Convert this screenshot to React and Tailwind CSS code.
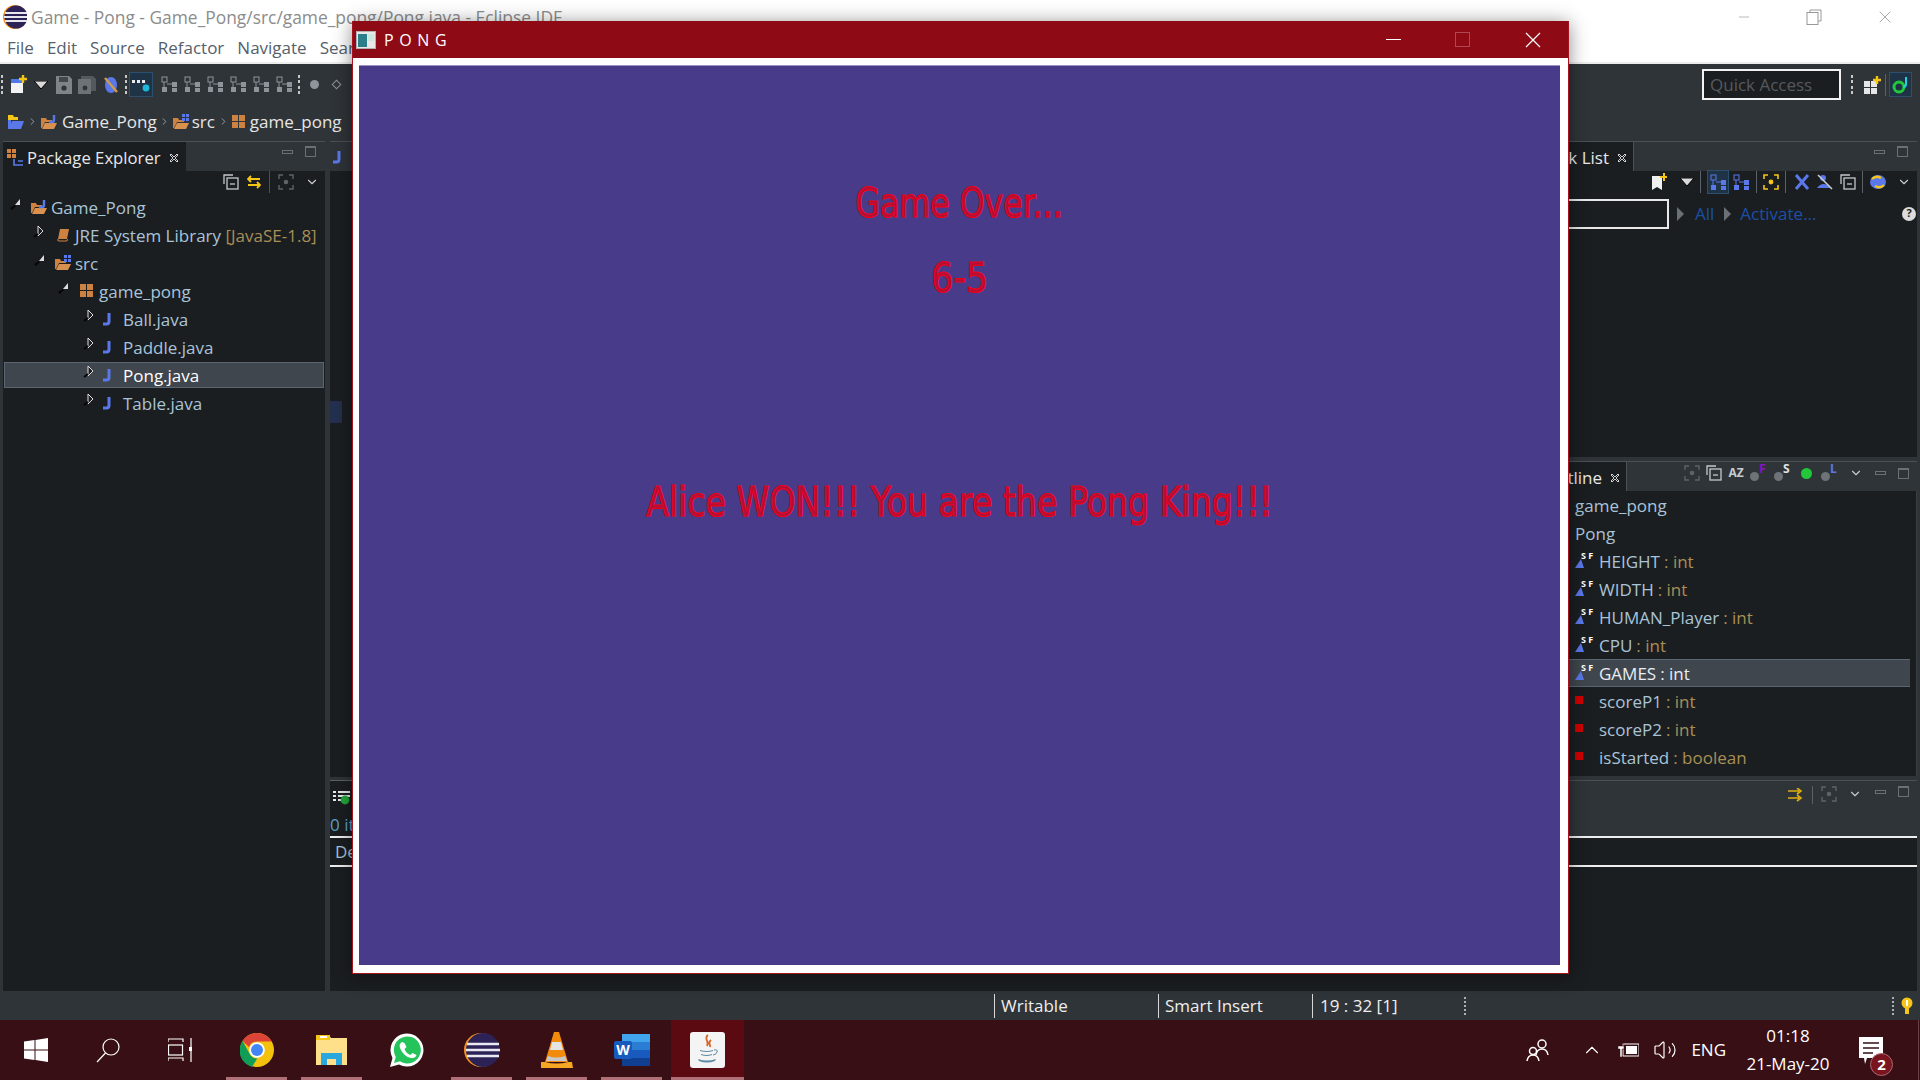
import React from "react";
import { ChevronDown, ChevronRight, ChevronUp, Minus, X, Volume2 } from "lucide-react";

const uiFont = "font-['Open_Sans',sans-serif]";
const treeText = "text-[17px] leading-none text-[#a9c4d8] whitespace-nowrap";

const Arrow = ({ open }) =>
  open ? (
    <svg width="14" height="14" viewBox="0 0 14 14" className="shrink-0">
      <path d="M12 2v6H7z" fill="#dcdcdc" />
      <path d="M2 11l5-3 1 1-4 4z" fill="#050505" />
    </svg>
  ) : (
    <svg width="14" height="14" viewBox="0 0 14 14" className="shrink-0">
      <path d="M6 1l5 5-5 5z" fill="#1c1f22" stroke="#e0e0e0" />
      <path d="M2 12l4-3" stroke="#050505" strokeWidth="2" />
    </svg>
  );

const JFile = ({ className = "" }) => (
  <svg width="12" height="16" viewBox="0 0 12 16" className={`shrink-0 ${className}`}>
    <path d="M8 2v8.500q0 2.500-2.500 2.500H2" fill="none" stroke="#5a78ea" strokeWidth="3" />
  </svg>
);

const Folder = ({ badge }) => (
  <svg width="18" height="16" viewBox="0 0 18 16" className="shrink-0">
    <path d="M1 14V4h5l1 2h5v2H5l-3 6z" fill="#cd8240" />
    <path d="M2 15l3-6h12l-3 6z" fill="#d99150" />
    {badge === "j" && <path d="M14 1v5q0 2-2 2H9" fill="none" stroke="#5a78ea" strokeWidth="2.400" />}
    {badge === "p" && (
      <g fill="#5a78ea">
        <rect x="10" y="0" width="3" height="3" />
        <rect x="14" y="0" width="3" height="3" />
        <rect x="10" y="4" width="3" height="3" />
        <rect x="14" y="4" width="3" height="3" />
      </g>
    )}
  </svg>
);

const Pkg = () => (
  <svg width="14" height="14" viewBox="0 0 14 14" className="shrink-0">
    <g fill="#cd8240">
      <rect x="0" y="0" width="6" height="6" />
      <rect x="7" y="0" width="6" height="6" />
      <rect x="0" y="7" width="6" height="6" />
      <rect x="7" y="7" width="6" height="6" />
    </g>
  </svg>
);

const Lib = () => (
  <svg width="14" height="14" viewBox="0 0 14 14" className="shrink-0">
    <path d="M4 1h9l-2 10H2z" fill="#cd8240" />
    <path d="M2 11q-1 2 1 2h8l.5-2" fill="none" stroke="#cd8240" />
  </svg>
);

const TreeRow = ({ indent, arrow, icon, children, selected, file }) => (
  <div
    className={`flex items-center ${
      selected ? "mx-px my-px h-[26px] border border-[#5c6670] bg-[#3f464d]" : "h-[28px]"
    }`}
    style={{ paddingLeft: indent }}
  >
    <span className="-mt-[6px] w-[19px] shrink-0">
      <Arrow open={arrow === "open"} />
    </span>
    <span className={`flex shrink-0 justify-center ${file ? "w-[22px]" : "w-[24px]"}`}>{icon}</span>
    <span className={`${treeText} ${selected ? "text-white" : ""}`}>{children}</span>
  </div>
);

const Decor = ({ children }) => <span className="text-[#a88f55]">{children}</span>;

const MinMax = () => (
  <div className="flex items-center gap-[12px]">
    <span className="h-[4px] w-[11px] border border-[#6a7075]" />
    <span className="h-[11px] w-[11px] border border-[#6a7075] border-t-2" />
  </div>
);

const Focus = () => (
  <svg width="16" height="16" viewBox="0 0 16 16" fill="none" stroke="#5d6368" strokeWidth="1.400" className="shrink-0">
    <path d="M1 5V1h4M11 1h4v4M15 11v4h-4M5 15H1v-4" />
    <circle cx="8" cy="8" r="1.600" fill="#5d6368" />
  </svg>
);

const Collapse = () => (
  <svg width="16" height="16" viewBox="0 0 16 16" fill="none" stroke="#c4c8cc" strokeWidth="1.300" className="shrink-0">
    <path d="M1 10V1h9" />
    <rect x="4" y="4" width="11" height="11" />
    <path d="M7 10h5" />
  </svg>
);

const TreeTool = ({ color = "#8e9499" }) => (
  <svg width="17" height="17" viewBox="0 0 17 17" fill={color} className="shrink-0">
    <rect x="1" y="1" width="5" height="5" fill="none" stroke={color} />
    <rect x="1" y="11" width="5" height="5" />
    <rect x="11" y="6" width="5" height="5" />
    <rect x="11" y="12" width="5" height="4" />
    <path d="M6 8h5M3 6v5" stroke={color} />
  </svg>
);

const Grid = ({ accent }) => (
  <svg width="20" height="20" viewBox="0 0 20 20" className="shrink-0">
    <path d="M3 4h12v14H3z" fill="#f2f2f2" />
    <path d="M3 4h12v4H3z" fill="#4e78e8" />
    <path d="M15 0v8M11 4h8" stroke={accent} strokeWidth="2.400" />
  </svg>
);

const Sep = () => <span className="mx-[3px] h-[22px] w-px shrink-0 bg-[#5b6166]" />;
const Dots = () => (
  <span className="flex h-[20px] shrink-0 flex-col justify-between">
    <i className="h-[3px] w-[2px] bg-[#c8c8c8]" />
    <i className="h-[3px] w-[2px] bg-[#c8c8c8]" />
    <i className="h-[3px] w-[2px] bg-[#c8c8c8]" />
    <i className="h-[3px] w-[2px] bg-[#c8c8c8]" />
  </span>
);

const DropTri = () => (
  <svg width="14" height="8" viewBox="0 0 14 8" className="shrink-0">
    <path d="M0 0h14L7 8z" fill="#dadada" stroke="#000" strokeWidth="1" />
  </svg>
);

const MainToolbar = () => (
  <div className="flex h-[41px] shrink-0 items-center bg-[#2f3438] pl-[1px]">
    <Dots />
    <span className="ml-[5px]"><Grid accent="#f5c518" /></span>
    <span className="ml-[6px]"><DropTri /></span>
    <svg width="16" height="18" viewBox="0 0 16 18" className="ml-[8px] shrink-0">
      <path d="M0 0h13l3 3v15H0z" fill="#7f8488" />
      <rect x="3" y="1" width="9" height="5" fill="#42474b" />
      <circle cx="8" cy="12" r="2.600" fill="#2f3438" />
    </svg>
    <svg width="18" height="18" viewBox="0 0 18 18" className="ml-[6px] shrink-0">
      <path d="M3 0h12l3 3v12H3z" fill="#54595d" />
      <path d="M0 3h13v15H0z" fill="#6d7276" />
      <circle cx="7" cy="12" r="2.400" fill="#2f3438" />
    </svg>
    <svg width="16" height="18" viewBox="0 0 16 18" className="ml-[7px] shrink-0">
      <ellipse cx="8" cy="9" rx="6" ry="8" fill="#5a78ea" />
      <path d="M2 2l12 14" stroke="#cd9a50" strokeWidth="2.400" />
    </svg>
    <span className="ml-[6px]"><Dots /></span>
    <span className="ml-[2px] flex h-[25px] w-[24px] items-center justify-center border border-[#2c4f6d] bg-[#1f3347]">
      <svg width="18" height="14" viewBox="0 0 18 14">
        <g fill="#e8e8e8"><rect x="0" y="2" width="3" height="3" /><rect x="5" y="2" width="3" height="3" /><rect x="10" y="2" width="3" height="3" /></g>
        <circle cx="14" cy="10" r="3.400" fill="#1fb8d8" />
      </svg>
    </span>
    <span className="ml-[8px] flex items-center gap-[6px]">
      <TreeTool />
      <TreeTool />
      <TreeTool />
      <TreeTool />
      <TreeTool />
      <TreeTool />
    </span>
    <span className="ml-[5px]"><Dots /></span>
    <span className="ml-[10px] h-[9px] w-[9px] rounded-full bg-[#8e9499]" />
    <span className="ml-[14px] h-[7px] w-[7px] rotate-45 border border-[#8e9499]" />
    <div className="ml-auto flex items-center pr-[8px]">
      <div className={`flex h-[31px] w-[139px] items-center border-2 border-[#f2f2f2] bg-[#1b1e21] pl-[6px] text-[17px] text-[#55595d] ${uiFont}`}>
        Quick Access
      </div>
      <span className="ml-[10px] mr-[9px]"><Dots /></span>
      <svg width="20" height="20" viewBox="0 0 20 20" className="shrink-0">
        <g fill="#e6e6e6"><rect x="2" y="6" width="6" height="6" /><rect x="9" y="6" width="6" height="6" /><rect x="2" y="13" width="6" height="6" /><rect x="9" y="13" width="6" height="6" /></g>
        <path d="M15 1v8M11 5h8" stroke="#f5c518" strokeWidth="2.400" />
      </svg>
      <Sep />
      <span className="flex h-[25px] w-[23px] items-center justify-center border border-[#2c4f6d] bg-[#1f3347]">
        <svg width="20" height="20" viewBox="0 0 20 20" fill="none">
          <circle cx="8" cy="12" r="5" stroke="#22c83a" strokeWidth="3" />
          <path d="M15 2v7q0 3-3 3" stroke="#20d0e0" strokeWidth="2" />
        </svg>
      </span>
    </div>
  </div>
);

const Breadcrumb = () => (
  <div className={`flex h-[36px] shrink-0 items-center bg-[#2f3438] pb-[3px] pl-[8px] text-[17px] text-[#e6e6e6] ${uiFont}`}>
    <svg width="16" height="16" viewBox="0 0 16 16" className="shrink-0">
      <path d="M0 1h5l1 2h4v3H0z" fill="#f5c518" />
      <path d="M1 15l3-8h12l-3 8z" fill="#5a78ea" />
      <path d="M0 6h3v9H0z" fill="#5a78ea" />
    </svg>
    <ChevronRight size={11} className="ml-[3px] mr-[2px] text-[#a0a4a8]" />
    <Folder badge="j" />
    <span className="ml-[4px]">Game_Pong</span>
    <ChevronRight size={11} className="ml-[2px] mr-[2px] text-[#a0a4a8]" />
    <Folder badge="p" />
    <span className="ml-[2px]">src</span>
    <ChevronRight size={11} className="ml-[3px] mr-[3px] text-[#a0a4a8]" />
    <Pkg />
    <span className="ml-[4px]">game_pong</span>
  </div>
);

const TabStrip = ({ children, right }) => (
  <div className="flex h-[30px] shrink-0 items-stretch border-t border-[#4a5055] bg-[#2f3438]">
    {children}
    <div className="ml-auto flex items-center self-start pt-[4px] pr-[9px]">{right}</div>
  </div>
);

const TabClose = () => (
  <svg width="10" height="10" viewBox="0 0 10 10" className="ml-[8px] shrink-0" fill="none" stroke="#cfcfcf">
    <path d="M1 2l1-1 3 3 3-3 1 1-3 3 3 3-1 1-3-3-3 3-1-1 3-3z" />
  </svg>
);

const PackageExplorer = () => (
  <div className="flex w-[322px] shrink-0 flex-col">
    <TabStrip right={<MinMax />}>
      <div className={`flex w-[183px] items-center bg-[#1b1e21] pl-[4px] pt-[2px] text-[16.700px] text-[#e8e8e8] ${uiFont}`}>
        <svg width="18" height="18" viewBox="0 0 18 18" className="shrink-0">
          <g fill="#cd8240"><rect x="0" y="0" width="4" height="4" /><rect x="5" y="0" width="4" height="4" /><rect x="0" y="5" width="4" height="4" /><rect x="5" y="5" width="4" height="4" /></g>
          <path d="M7 10v6h4M11 12h5M11 16h5" stroke="#5a78ea" fill="none" strokeWidth="1.600" />
        </svg>
        <span className="ml-[2px] whitespace-nowrap">Package Explorer</span>
        <TabClose />
      </div>
    </TabStrip>
    <div className={`min-h-0 flex-1 bg-[#1b1e21] ${uiFont}`}>
      <div className="flex h-[22px] items-center justify-end gap-[8px] pr-[6px]">
        <Collapse />
        <svg width="14" height="14" viewBox="0 0 14 14" fill="none" stroke="#f5c518" strokeWidth="1.800">
          <path d="M1 4h12M4 1L1 4l3 3M13 10H1M10 7l3 3-3 3" />
        </svg>
        <span className="h-[22px] w-px bg-[#4c5156]" />
        <Focus />
        <ChevronDown size={14} className="ml-[3px] text-[#c8c8c8]" />
      </div>
      <div>
        <TreeRow indent={5} arrow="open" icon={<Folder badge="j" />}>Game_Pong</TreeRow>
        <TreeRow indent={29} icon={<Lib />}>
          JRE System Library <Decor>[JavaSE-1.8]</Decor>
        </TreeRow>
        <TreeRow indent={29} arrow="open" icon={<Folder badge="p" />}>src</TreeRow>
        <TreeRow indent={53} arrow="open" icon={<Pkg />}>game_pong</TreeRow>
        <TreeRow indent={79} file icon={<JFile className="mr-[10px]" />}>Ball.java</TreeRow>
        <TreeRow indent={79} file icon={<JFile className="mr-[10px]" />}>Paddle.java</TreeRow>
        <TreeRow indent={77} file icon={<JFile className="mr-[10px]" />} selected>Pong.java</TreeRow>
        <TreeRow indent={79} file icon={<JFile className="mr-[10px]" />}>Table.java</TreeRow>
      </div>
    </div>
  </div>
);

const EditorColumn = () => (
  <div className={`ml-[5px] flex min-w-0 flex-1 flex-col ${uiFont}`}>
    <div className="flex h-[30px] shrink-0 items-center border-t border-[#4a5055] bg-[#2f3438] pl-[1px]">
      <JFile />
    </div>
    <div className="relative h-[606px] shrink-0 bg-[#1b1e21]">
      <span className="absolute left-0 top-[230px] h-[22px] w-[12px] bg-[#23304f]" />
    </div>
    <div className="h-[3px] shrink-0 bg-[#2f3438]" />
    <div className="flex min-h-0 flex-1 flex-col border-t border-[#5b6166] bg-[#1b1e21]">
      <div className="flex h-[32px] shrink-0 items-center bg-[#1b1e21] pl-[3px]">
        <svg width="18" height="16" viewBox="0 0 18 16">
          <path d="M0 2h3v2H0zM0 6h3v2H0zM0 10h3v2H0zM5 2h12v2H5zM5 6h12v2H5zM5 10h6v2H5z" fill="#e8e8e8" />
          <circle cx="12" cy="11" r="4.400" fill="#22a83a" />
        </svg>
      </div>
      <div className="h-[23px] shrink-0 whitespace-nowrap text-[17px] leading-[23px] text-[#5da0c8]">0 items</div>
      <div className="h-[31px] shrink-0 whitespace-nowrap border-y-2 border-[#eeeeee] pl-[5px] text-[17px] leading-[27px] text-[#a9c4d8]">Description</div>
    </div>
  </div>
);

const SF = () => (
  <span className="relative flex h-[14px] w-[18px] shrink-0">
    <svg width="10" height="10" viewBox="0 0 10 10" className="absolute bottom-0 left-0">
      <path d="M0 10L6 1l3 9z" fill="#5a78ea" />
    </svg>
    <span className="absolute -top-[3px] left-[6px] whitespace-nowrap text-[9px] font-bold leading-[10px] text-white">S F</span>
  </span>
);

const OutlineRow = ({ name, type, selected, field }) => (
  <div
    className={`flex h-[28px] items-center pl-[10px] ${treeText} ${
      selected ? "mr-[6px] border-y border-[#5c6670] bg-[#3f464d]" : ""
    }`}
  >
    <span className="flex w-[24px] shrink-0 items-center">
      {field === "static" ? <SF /> : <span className="mb-[3px] h-[8px] w-[8px] bg-[#d00000]" />}
    </span>
    <span className={selected ? "text-[#e8eef4]" : ""}>{name}</span>
    <span className={`ml-[4px] ${selected ? "text-[#e8eef4]" : "text-[#a88f55]"}`}>: {type}</span>
  </div>
);

const Dim = ({ letter, color }) => (
  <span className="relative h-[16px] w-[18px] shrink-0">
    <span className="absolute bottom-0 left-0 h-[9px] w-[9px] rounded-full bg-[#6e7377]" />
    <span className="absolute -top-[3px] left-[9px] text-[12px] font-bold leading-[14px]" style={{ color }}>{letter}</span>
  </span>
);

const RightColumn = () => (
  <div className={`flex w-[420px] shrink-0 flex-col pr-[3px] ${uiFont}`}>
    <div className="flex h-[316px] shrink-0 flex-col">
      <TabStrip right={<MinMax />}>
        <div className="flex w-[134px] items-center justify-end border-r border-[#4a5055] bg-[#1b1e21] pr-[6px] pt-[2px] text-[17px] text-[#e8e8e8]">
          Task List
          <TabClose />
        </div>
      </TabStrip>
      <div className="min-h-0 flex-1 bg-[#1b1e21]">
        <div className="flex h-[22px] items-center justify-end gap-[3px] pr-[6px]">
          <svg width="16" height="18" viewBox="0 0 16 18" className="shrink-0">
            <path d="M1 3h10v14l-5-3-5 3z" fill="#f0f0f0" />
            <path d="M13 0v8M9 4h7" stroke="#f5c518" strokeWidth="2" />
          </svg>
          <span className="ml-[10px]"><DropTri /></span>
          <Sep />
          <span className="flex h-[24px] w-[22px] items-center justify-center border border-[#2c4f6d] bg-[#1f3347]">
            <TreeTool color="#5a78ea" />
          </span>
          <span className="ml-[1px]"><TreeTool color="#5a78ea" /></span>
          <Sep />
          <svg width="16" height="16" viewBox="0 0 16 16" fill="none" stroke="#f5c518" strokeWidth="1.600" className="shrink-0">
            <path d="M1 5V1h4M11 1h4v4M15 11v4h-4M5 15H1v-4" />
            <circle cx="8" cy="8" r="1.600" fill="#f5c518" />
          </svg>
          <Sep />
          <svg width="16" height="16" viewBox="0 0 16 16" className="ml-[2px] shrink-0">
            <path d="M2 1l12 14M14 1L2 15" stroke="#5a78ea" strokeWidth="3" />
          </svg>
          <svg width="18" height="16" viewBox="0 0 18 16" className="ml-[3px] shrink-0">
            <circle cx="7" cy="4" r="3" fill="#5a78ea" />
            <path d="M1 14q6-8 14 0z" fill="#5a78ea" />
            <path d="M2 1l14 14" stroke="#c8ccd0" strokeWidth="1.600" />
          </svg>
          <span className="ml-[3px]"><Collapse /></span>
          <Sep />
          <svg width="18" height="16" viewBox="0 0 18 16" className="shrink-0">
            <ellipse cx="9" cy="8" rx="8" ry="7" fill="#5a78ea" />
            <path d="M3 5q4-4 9-1M15 11q-4 4-9 1" fill="none" stroke="#f5c518" strokeWidth="2.400" />
          </svg>
          <ChevronDown size={14} className="ml-[7px] text-[#c8c8c8]" />
        </div>
        <div className="flex h-[33px] items-center pt-[8px]">
          <div className="h-[30px] w-[169px] shrink-0 border-2 border-[#e8e8e8] bg-[#1b1e21]" />
          <svg width="8" height="14" viewBox="0 0 8 14" className="ml-[8px] shrink-0"><path d="M0 0l7 7-7 7z" fill="#6a7075" /></svg>
          <span className="ml-[10px] text-[17px] text-[#1a4fa8]">All</span>
          <svg width="8" height="14" viewBox="0 0 8 14" className="ml-[10px] shrink-0"><path d="M0 0l7 7-7 7z" fill="#6a7075" /></svg>
          <span className="ml-[8px] text-[17px] text-[#1a4fa8]">Activate...</span>
          <span className="ml-auto mr-[1px] flex h-[14px] w-[14px] items-center justify-center rounded-full bg-[#dcdcdc] text-[11px] font-bold text-[#1b1e21]">?</span>
        </div>
      </div>
    </div>
    <div className="h-[4px] shrink-0 bg-[#2f3438]" />
    <div className="flex h-[315px] shrink-0 flex-col">
      <div className="flex h-[30px] shrink-0 items-center border-t border-[#4a5055] bg-[#2f3438]">
        <div className="flex h-full w-[127px] items-center justify-end border-r border-[#4a5055] bg-[#1b1e21] pr-[6px] pt-[2px] text-[17px] text-[#e8e8e8]">
          Outline
          <TabClose />
        </div>
        <div className="ml-auto flex items-center gap-[6px] pb-[7px] pr-[8px]">
          <Focus />
          <Collapse />
          <span className="w-[16px] text-center text-[12px] font-bold leading-none text-[#c8ccd0]">AZ</span>
          <Dim letter="F" color="#8a12c8" />
          <Dim letter="S" color="#e0e0e0" />
          <span className="mx-[3px] h-[11px] w-[11px] rounded-full bg-[#22c83a]" />
          <Dim letter="L" color="#5a78ea" />
          <ChevronDown size={14} className="ml-[4px] text-[#c8c8c8]" />
          <span className="ml-[6px]"><MinMax /></span>
        </div>
      </div>
      <div className="min-h-0 flex-1 overflow-hidden border-r border-[#3a3f44] bg-[#1b1e21]">
        <div className={`flex h-[28px] items-center pl-[75px] ${treeText}`}>game_pong</div>
        <div className={`flex h-[28px] items-center pl-[75px] ${treeText}`}>Pong</div>
        <div className="pl-[65px]">
          <OutlineRow field="static" name="HEIGHT" type="int" />
          <OutlineRow field="static" name="WIDTH" type="int" />
          <OutlineRow field="static" name="HUMAN_Player" type="int" />
          <OutlineRow field="static" name="CPU" type="int" />
          <OutlineRow field="static" name="GAMES" type="int" selected />
          <OutlineRow field="private" name="scoreP1" type="int" />
          <OutlineRow field="private" name="scoreP2" type="int" />
          <OutlineRow field="private" name="isStarted" type="boolean" />
        </div>
      </div>
    </div>
    <div className="h-[4px] shrink-0 bg-[#2f3438]" />
    <div className="flex min-h-0 flex-1 flex-col border-t border-[#4a5055] bg-[#2f3438]">
      <div className="flex h-[55px] shrink-0 justify-end gap-[8px] pt-[5px] pr-[8px]">
        <svg width="16" height="14" viewBox="0 0 16 14" fill="none" stroke="#e0b010" strokeWidth="1.600" className="mt-[2px]">
          <path d="M0 3h11M0 10h11M9 0l4 3-4 3M9 7l4 3-4 3" />
        </svg>
        <span className="h-[18px] w-px bg-[#5b6166]" />
        <Focus />
        <ChevronDown size={14} className="ml-[3px] mt-[1px] text-[#c8c8c8]" />
        <span className="ml-[5px] h-fit"><MinMax /></span>
      </div>
      <div className="h-[31px] shrink-0 border-y-2 border-[#eeeeee] bg-[#1b1e21]" />
      <div className="min-h-0 flex-1 bg-[#1b1e21]" />
    </div>
  </div>
);

const StatusBar = () => (
  <div className={`flex h-[29px] shrink-0 items-center bg-[#2f3438] text-[17px] text-[#eeeeee] ${uiFont}`}>
    <div className="ml-[994px] flex h-[24px] w-[164px] items-center border-l border-[#d8d8d8] pl-[6px]">Writable</div>
    <div className="flex h-[24px] w-[154px] items-center border-l border-[#d8d8d8] pl-[6px]">Smart Insert</div>
    <div className="flex h-[24px] w-[152px] items-center border-l border-[#d8d8d8] pl-[7px]">19 : 32 [1]</div>
    <span className="h-[18px] border-l-2 border-dotted border-[#b0b0b0]" />
    <span className="ml-auto h-[18px] border-l-2 border-dotted border-[#b0b0b0]" />
    <svg width="12" height="18" viewBox="0 0 12 18" className="ml-[7px] mr-[7px]">
      <circle cx="6" cy="6" r="5.500" fill="#f5c518" />
      <rect x="4" y="9" width="4" height="8" fill="#f5c518" />
      <rect x="5" y="3" width="2" height="6" fill="#ffffff" />
    </svg>
  </div>
);

const ChromeLogo = () => (
  <svg width="34" height="34" viewBox="0 0 34 34">
    <circle cx="17" cy="17" r="17" fill="#f4c20d" />
    <path d="M17 0a17 17 0 0 1 14.700 8.500H17a8.500 8.500 0 0 0-8 5.500L2.600 8A17 17 0 0 1 17 0z" fill="#db4437" />
    <path d="M2.600 8l6.600 12a8.500 8.500 0 0 0 8 5.500L12 34A17 17 0 0 1 2.600 8z" fill="#0f9d58" />
    <circle cx="17" cy="17" r="7.800" fill="#fff" />
    <circle cx="17" cy="17" r="6" fill="#4285f4" />
  </svg>
);

const ExplorerLogo = () => (
  <svg width="33" height="34" viewBox="0 0 33 34">
    <path d="M1 2h13l2 3h16v27H1z" fill="#ffe08a" />
    <path d="M1 2h14v5H1z" fill="#f5c518" />
    <rect x="5" y="3" width="7" height="2" fill="#fff" />
    <path d="M6 32V20h21v12h-6v-6h-9v6z" fill="#29a8e0" />
  </svg>
);

const WhatsAppLogo = () => (
  <svg width="34" height="34" viewBox="0 0 34 34">
    <path d="M0 34l2.500-9A16.500 16.500 0 1 1 9 31.500z" fill="#fff" />
    <path d="M4 30l1.800-6A13.500 13.500 0 1 1 10 28.300z" fill="#25c45a" />
    <path d="M12 9c-2 1-3 3-2 6 2 5 6 9 11 10 3 .5 5-1 5.500-3l-4-2-2 2c-3-1-5-3-6-6l2-2-2-4z" fill="#fff" />
  </svg>
);

const EclipseLogo = () => (
  <svg width="37" height="34" viewBox="0 0 37 34">
    <circle cx="18" cy="17" r="17" fill="#f7941e" />
    <circle cx="20" cy="17" r="17" fill="#2c2255" />
    <path d="M4 11h32M3 17h34M4 23h32" stroke="#e8e8f0" strokeWidth="2.400" />
  </svg>
);

const VlcLogo = () => (
  <svg width="32" height="36" viewBox="0 0 32 36">
    <path d="M13 0h5l9 30H4z" fill="#f28a0c" />
    <path d="M11 10h9l2 8H9z" fill="#e4e4e4" />
    <path d="M7 24q9 3 17 0l2 5H5z" fill="#c8c8c8" />
    <path d="M0 30h4q12 3 23 0h4l1 6H0z" fill="#f5a623" />
  </svg>
);

const WordLogo = () => (
  <svg width="36" height="34" viewBox="0 0 36 34">
    <rect x="8" y="1" width="28" height="32" rx="2" fill="#2b7cd3" />
    <rect x="8" y="1" width="28" height="8" fill="#41a5ee" />
    <rect x="8" y="17" width="28" height="8" fill="#185abd" />
    <rect x="8" y="25" width="28" height="8" fill="#103f91" />
    <rect x="0" y="8" width="18" height="18" rx="2" fill="#185abd" />
    <text x="9" y="22" textAnchor="middle" fontSize="14" fontWeight="700" fill="#fff" fontFamily="Open Sans">W</text>
  </svg>
);

const JavaLogo = () => (
  <svg width="35" height="36" viewBox="0 0 35 36">
    <rect width="35" height="36" rx="3" fill="#f4f4f4" />
    <path d="M18 3c-5 4 2 6-1 11M21 8c-4 3 0 4-1 7" fill="none" stroke="#d8652a" strokeWidth="1.800" />
    <path d="M10 18q7 2 13 0v1q-6 2-13 0zM11 22q6 2 11 0v1q-5 2-11 0zM8 27q9 3 18 0l-1 2q-8 3-16 0z" fill="#5d8aa5" />
    <path d="M24 18q4-1 3 2t-4 3" fill="none" stroke="#5d8aa5" />
  </svg>
);

const apps = [
  { key: "chrome", icon: <ChromeLogo />, bar: true },
  { key: "explorer", icon: <ExplorerLogo />, bar: true },
  { key: "whatsapp", icon: <WhatsAppLogo /> },
  { key: "eclipse", icon: <EclipseLogo />, bar: true },
  { key: "vlc", icon: <VlcLogo />, bar: true },
  { key: "word", icon: <WordLogo />, bar: true },
];

const Taskbar = () => (
  <div className={`flex h-[60px] shrink-0 items-stretch bg-[#370f14] text-white ${uiFont}`}>
    <div className="flex w-[72px] items-center justify-center">
      <svg width="24" height="24" viewBox="0 0 24 24" fill="#fff">
        <path d="M0 3.500l10.500-1.500v9.500H0zM11.500 2L24 0v11.500H11.500zM0 12.500h10.500V22L0 20.500zM11.500 12.500H24V24l-12.500-2z" />
      </svg>
    </div>
    <div className="flex w-[72px] items-center justify-center">
      <svg width="25" height="25" viewBox="0 0 25 25" fill="none" stroke="#fff" strokeWidth="1.200">
        <circle cx="15" cy="9" r="8" />
        <path d="M9.500 15L1 24" />
      </svg>
    </div>
    <div className="flex w-[72px] items-center justify-center">
      <svg width="24" height="24" viewBox="0 0 24 24" fill="none" stroke="#fff" strokeWidth="1.200">
        <path d="M0 4V1h15v3M0 23v-3h15v3M23 0v24" />
        <rect x="0.500" y="7" width="14" height="10" />
        <rect x="21" y="9" width="4" height="4" fill="#fff" stroke="none" />
      </svg>
    </div>
    <div className="ml-[3px] flex">
      {apps.map((app) => (
        <div key={app.key} className="relative flex w-[75px] items-center justify-center">
          {app.icon}
          {app.bar && <span className="absolute bottom-0 left-[7px] h-[3px] w-[61px] bg-[#b07078]" />}
        </div>
      ))}
      <div className="relative ml-[2px] flex w-[73px] items-center justify-center bg-[#5c0a12]">
        <JavaLogo />
        <span className="absolute bottom-0 left-0 h-[3px] w-full bg-[#b07078]" />
      </div>
    </div>
    <div className="ml-auto flex items-center">
      <svg width="24" height="24" viewBox="0 0 24 24" fill="none" stroke="#fff" strokeWidth="1.500" className="mr-[31px]">
        <circle cx="16" cy="6" r="4" />
        <path d="M10 17q1-6 6-6t6 6" />
        <circle cx="7" cy="13" r="3.500" />
        <path d="M1 23q1-6 6-6t6 6" />
      </svg>
      <ChevronUp size={22} strokeWidth={1.200} className="mr-[14px]" />
      <svg width="22" height="20" viewBox="0 0 22 20" className="mr-[14px]">
        <rect x="6" y="4" width="16" height="12" fill="none" stroke="#fff" />
        <rect x="9" y="6" width="11" height="8" fill="#fff" />
        <path d="M2 1v5M6 1v5M1 6h6v3H5v8H3V9H1z" fill="#fff" stroke="#370f14" strokeWidth=".5" />
      </svg>
      <Volume2 size={24} strokeWidth={1.200} className="mr-[14px]" />
      <span className="mr-[17px] text-[17px]">ENG</span>
      <div className="mr-[26px] flex w-[90px] flex-col items-center gap-[8px] text-[17px] leading-[20px]">
        <span>01:18</span>
        <span className="whitespace-nowrap">21-May-20</span>
      </div>
      <span className="relative mr-[35px] h-[26px] w-[24px]">
        <svg width="24" height="30" viewBox="0 0 24 30">
          <path d="M0 0h24v21H8l-2 6-1-6H0z" fill="#fff" />
          <path d="M4 6h16M4 11h16M4 16h10" stroke="#370f14" strokeWidth="1.500" />
        </svg>
        <span className="absolute -bottom-[13px] -right-[10px] flex h-[23px] w-[23px] items-center justify-center rounded-full border border-[#a86a70] bg-[#7a1520] text-[15px] font-bold leading-none">2</span>
      </span>
      <span className="mr-[1px] h-full w-px bg-[#6b3f44]" />
    </div>
  </div>
);

const Score = ({ children, className }) => (
  <div
    className={`origin-center whitespace-nowrap font-['DejaVu_Sans',sans-serif] text-[40px] leading-none text-[#b01038] [-webkit-text-stroke:1.200px_#ee0018] ${className}`}
  >
    {children}
  </div>
);

const PongWindow = () => (
  <div className="absolute left-[352px] top-[21px] flex h-[953px] w-[1217px] flex-col border-r border-b border-l border-[#a3141f] bg-white shadow-[0_2px_18px_rgba(0,0,0,0.45)]">
    <div className={`flex h-[37px] shrink-0 items-center bg-[#8e0a15] pl-[3px] ${uiFont}`}>
      <svg width="20" height="18" viewBox="0 0 20 18" className="shrink-0">
        <rect x="0.500" y="0.500" width="19" height="17" fill="#e8e8e8" stroke="#b0b0b0" />
        <rect x="2" y="3" width="9" height="13" fill="#2c7f8a" />
        <rect x="12" y="3" width="6" height="7" fill="#c8e8e0" />
      </svg>
      <span className="ml-[8px] text-[16px] tracking-[5.600px] text-white">PONG</span>
      <div className="ml-auto flex items-center">
        <span className="flex w-[69px] justify-center"><span className="h-[1px] w-[15px] bg-white" /></span>
        <span className="flex w-[69px] justify-center"><span className="h-[15px] w-[15px] border border-[#b04650]" /></span>
        <span className="flex w-[71px] justify-center">
          <svg width="16" height="16" viewBox="0 0 16 16" stroke="#fff" strokeWidth="1.200"><path d="M1 1l14 14M15 1L1 15" /></svg>
        </span>
      </div>
    </div>
    <div className="ml-[6px] mr-[8px] mt-[7px] flex h-[900px] flex-col items-center border-t border-[#9a92c4] bg-[#483b8a] pt-[117px]">
      <Score className="scale-x-[0.79]">Game Over...</Score>
      <Score className="mt-[35px] scale-x-[0.87]">6-5</Score>
      <Score className="mt-[184px] scale-x-[0.83]">Alice WON!!! You are the Pong King!!!</Score>
    </div>
  </div>
);

export default function App() {
  return (
    <div className={`relative flex h-[1080px] w-[1920px] flex-col overflow-hidden bg-[#2f3438] ${uiFont}`}>
      <div className="flex h-[34px] shrink-0 items-center bg-white pl-[3px]">
        <svg width="24" height="24" viewBox="0 0 24 24" className="shrink-0">
          <circle cx="12" cy="12" r="12" fill="#f7941e" />
          <circle cx="13" cy="12" r="11.500" fill="#2c2255" />
          <path d="M2 8h22M1 12h23M2 16h22" stroke="#e8e8f0" strokeWidth="1.800" />
        </svg>
        <span className="ml-[4px] text-[17.400px] text-[#8c8c8c]">Game - Pong - Game_Pong/src/game_pong/Pong.java - Eclipse IDE</span>
        <div className="ml-auto flex items-center">
          <span className="flex w-[70px] justify-center"><Minus size={16} strokeWidth={1} className="text-[#999]" /></span>
          <span className="flex w-[71px] justify-center pr-[2px]">
            <svg width="16" height="16" viewBox="0 0 16 16" fill="none" stroke="#999"><path d="M4 3V1h11v11h-3" /><rect x="1" y="3.500" width="11" height="12" /></svg>
          </span>
          <span className="flex w-[70px] justify-center"><X size={20} strokeWidth={1} className="text-[#999]" /></span>
        </div>
      </div>
      <div className="flex h-[30px] shrink-0 items-center gap-[13px] border-b-2 border-[#ececec] bg-white pl-[7px] text-[17px] text-[#55606c]">
        <span>File</span>
        <span>Edit</span>
        <span>Source</span>
        <span>Refactor</span>
        <span>Navigate</span>
        <span>Search</span>
      </div>
      <MainToolbar />
      <Breadcrumb />
      <div className="flex min-h-0 flex-1 pl-[3px]">
        <PackageExplorer />
        <EditorColumn />
        <RightColumn />
      </div>
      <StatusBar />
      <Taskbar />
      <PongWindow />
    </div>
  );
}
